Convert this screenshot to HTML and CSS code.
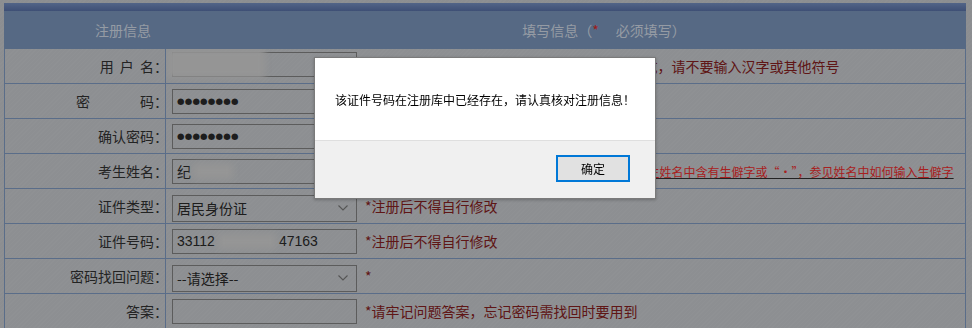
FILE: index.html
```html
<!DOCTYPE html>
<html lang="zh-CN">
<head>
<meta charset="utf-8">
<title>注册信息</title>
<link rel="stylesheet" href="styles.css">
</head>
<body>
<div class="page">
  <div class="form">
    <div class="stripe"></div>
    <div class="head">
      <div class="h-left">注册信息</div>
      <div class="h-right">填写信息（<span class="req">*</span><span class="hgap"></span>必须填写）</div>
    </div>

    <div class="row">
      <div class="label"><span class="lt spaced">用 户 名：</span></div>
      <div class="field">
        <div class="box with-blur"><span class="blur blur-user"></span></div>
        <span class="hint hint-user">*用户名只能由英文字母、数字及下划线等组成，请不要输入汉字或其他符号</span>
      </div>
    </div>

    <div class="row">
      <div class="label"><span class="lt">密<span class="gap"></span>码：</span></div>
      <div class="field">
        <div class="box"><span class="dots">●●●●●●●●</span></div>
      </div>
    </div>

    <div class="row">
      <div class="label"><span class="lt">确认密码：</span></div>
      <div class="field">
        <div class="box"><span class="dots">●●●●●●●●</span></div>
      </div>
    </div>

    <div class="row">
      <div class="label"><span class="lt">考生姓名：</span></div>
      <div class="field">
        <div class="box"><span class="val">纪</span><span class="blur blur-name"></span></div>
        <a class="hint link">*请填写与身份证件一致的真实姓名（不含空格），若考生姓名中含有生僻字或“·”，参见姓名中如何输入生僻字</a>
      </div>
    </div>

    <div class="row">
      <div class="label"><span class="lt">证件类型：</span></div>
      <div class="field">
        <div class="box select"><span class="val">居民身份证</span>
          <svg class="chev" width="10" height="6" viewBox="0 0 10 6"><path d="M0.5 0.5 L5 5 L9.5 0.5" fill="none" stroke="currentColor" stroke-width="1.1"/></svg>
        </div>
        <span class="hint">*注册后不得自行修改</span>
      </div>
    </div>

    <div class="row">
      <div class="label"><span class="lt">证件号码：</span></div>
      <div class="field">
        <div class="box"><span class="val num">33112</span><span class="blur blur-id"></span><span class="val num">47163</span></div>
        <span class="hint">*注册后不得自行修改</span>
      </div>
    </div>

    <div class="row">
      <div class="label"><span class="lt">密码找回问题：</span></div>
      <div class="field">
        <div class="box select"><span class="val">--请选择--</span>
          <svg class="chev" width="10" height="6" viewBox="0 0 10 6"><path d="M0.5 0.5 L5 5 L9.5 0.5" fill="none" stroke="currentColor" stroke-width="1.1"/></svg>
        </div>
        <span class="hint">*</span>
      </div>
    </div>

    <div class="row">
      <div class="label"><span class="lt">答案：</span></div>
      <div class="field">
        <div class="box"></div>
        <span class="hint">*请牢记问题答案，忘记密码需找回时要用到</span>
      </div>
    </div>
  </div>
</div>

<div class="backdrop"></div>

<div class="dialog">
  <div class="dlg-body">该证件号码在注册库中已经存在，请认真核对注册信息！</div>
  <div class="dlg-foot"><button class="btn">确定</button></div>
</div>
</body>
</html>
```

FILE: styles.css
```css
html, body {
  margin: 0;
  padding: 0;
}
body {
  width: 972px;
  height: 328px;
  overflow: hidden;
  background: #c9ccd0;
  background-image: repeating-linear-gradient(135deg, rgba(255,255,255,0.06) 0 1px, rgba(0,0,0,0) 1px 3px);
  font-family: "Noto Sans CJK SC", "Noto Sans", sans-serif;
}
.page {
  padding: 3px 0 0 4px;
}
.form {
  width: 962px;
  box-sizing: border-box;
}
.stripe {
  height: 8px;
  background: linear-gradient(#7690c2, #5a72a9);
}
.head {
  height: 38px;
  display: flex;
  align-items: center;
  background: #7c97bd;
  color: #d6dfeb;
  font-size: 14px;
}
.h-left {
  width: 238px;
  text-align: center;
}
.h-right {
  flex: 1;
  text-align: center;
  padding-right: 0;
}
.hgap {
  display: inline-block;
  width: 17px;
}
.req {
  color: #e02828;
}
.row {
  display: grid;
  grid-template-columns: 161px 1fr;
  height: 35px;
  box-sizing: border-box;
  border-left: 1px solid #829dc4;
  border-right: 1px solid #829dc4;
  border-bottom: 1px solid #829dc4;
  background: rgba(255,255,255,0.03);
}
.label {
  border-right: 1px solid #829dc4;
  display: flex;
  align-items: center;
  justify-content: flex-end;
  padding-right: 0;
  font-size: 14px;
  color: #333;
  white-space: pre;
}
.lt {
  margin-right: -3px;
}
.spaced {
  word-spacing: 3px;
}
.gap {
  display: inline-block;
  width: 50px;
}
.field {
  display: flex;
  align-items: center;
  padding-left: 6px;
  position: relative;
  white-space: nowrap;
  overflow: hidden;
}
.box {
  width: 185px;
  height: 25px;
  box-sizing: border-box;
  border: 1px solid #858585;
  display: flex;
  align-items: center;
  padding-left: 4px;
  flex: none;
  font-size: 14px;
  color: #2a2a2a;
}
.box.select {
  height: 27px;
  margin-top: 4px;
  justify-content: space-between;
  padding-right: 8px;
}
.with-blur {
  position: relative;
  margin-top: -3px;
}
.chev {
  color: #7a7a7a;
}
.dots {
  font-family: "DejaVu Sans", sans-serif;
  font-size: 8.6px;
  letter-spacing: 0.2px;
  color: #2a2a2a;
}
.val {
  font-size: 14px;
}
.num {
  font-family: "Liberation Sans", sans-serif;
  font-size: 14px;
}
.blur {
  display: inline-block;
  background: #d6d6d6;
  filter: blur(3px);
}
.blur-user {
  position: absolute;
  left: -6px;
  top: -4px;
  width: 98px;
  height: 29px;
}
.blur-name {
  width: 40px;
  height: 15px;
  margin-left: 2px;
}
.blur-id {
  width: 58px;
  height: 15px;
  margin: 0 3px;
}
.hint {
  margin-left: 8px;
  font-size: 14px;
  color: #882020;
}
.hint-user {
  margin-left: 14px;
}
.link {
  font-size: 12px;
  color: #f02e2e;
  text-decoration: underline;
  text-decoration-color: #333;
  margin-left: 3px;
}
.backdrop {
  position: fixed;
  inset: 0;
  background: rgba(0,0,0,0.3);
}
.dialog {
  position: fixed;
  left: 314px;
  top: 57px;
  width: 342px;
  height: 142px;
  box-sizing: border-box;
  border: 1px solid #7a7a7a;
  background: #fff;
  display: flex;
  flex-direction: column;
  box-shadow: 0 1px 3px rgba(0,0,0,0.25);
}
.dlg-body {
  height: 82px;
  display: flex;
  align-items: center;
  padding-left: 20px;
  font-size: 12px;
  color: #000;
}
.dlg-foot {
  flex: 1;
  background: #f0f0f0;
  border-top: 1px solid #dfdfdf;
  display: flex;
  justify-content: flex-end;
  align-items: flex-start;
  padding: 14px 25px 0 0;
}
.btn {
  width: 74px;
  height: 27px;
  box-sizing: border-box;
  border: 2px solid #0078d7;
  background: #e1e1e1;
  font-family: "Noto Sans CJK SC", sans-serif;
  font-size: 12px;
  color: #000;
  padding: 0;
}
```
